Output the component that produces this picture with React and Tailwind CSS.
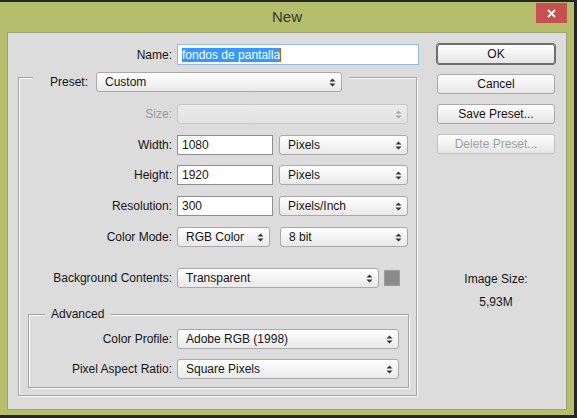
import React from 'react';

function Arrows({ color = '#333' }) {
  return (
    <svg width="7" height="9" viewBox="0 0 7 9" className="shrink-0">
      <path d="M3.5 0.5L6.5 3.5H0.5Z M3.5 8.5L6.5 5.5H0.5Z" fill={color} />
    </svg>
  );
}

function Select({ w, children, disabled }) {
  return (
    <div
      className={`flex h-[20px] ${w} shrink-0 items-center justify-between rounded-[3px] border pl-[8px] pr-[5px] ${
        disabled
          ? 'border-[#c8c8c8] bg-gradient-to-b from-[#ebebeb] to-[#e2e2e2]'
          : 'border-[#a9a9a9] bg-gradient-to-b from-[#ffffff] to-[#e9e9e9]'
      }`}
    >
      <span className="leading-none">{children}</span>
      <Arrows color={disabled ? '#a8a8a8' : '#333'} />
    </div>
  );
}

function Input({ w, children }) {
  return (
    <div className={`flex h-[20px] ${w} shrink-0 items-center border border-[#8e8e8e] bg-white pl-[4px]`}>
      <span className="leading-none">{children}</span>
    </div>
  );
}

function Row({ label, labelW, mt, children, muted }) {
  return (
    <div className={`flex h-[20px] items-center ${mt}`}>
      <span className={`${labelW} shrink-0 pr-[5px] text-right ${muted ? 'text-[#9a9a9a]' : ''}`}>{label}</span>
      {children}
    </div>
  );
}

function Btn({ children, primary, disabled, mt }) {
  return (
    <div
      className={`flex h-[20px] w-[118px] items-center justify-center rounded-[3px] border bg-gradient-to-b from-[#fdfdfd] to-[#e6e6e6] ${mt} ${
        primary ? 'border-[#6e6e6e] shadow-[0_0_0_1px_#6e6e6e]' : disabled ? 'border-[#c2c2c2]' : 'border-[#a9a9a9]'
      } ${disabled ? 'text-[#a0a0a0]' : ''}`}
    >
      {children}
    </div>
  );
}

export default function App() {
  return (
    <div className="h-[418px] w-[577px] bg-[#262626] pt-[2px] pr-[3px] pb-[3px] font-['Liberation_Sans',Arial,sans-serif] text-[12px] text-[#141414]">
      <div className="flex h-full flex-col bg-[#b5bf6b]">
        {/* title bar */}
        <div className="grid h-[30px] shrink-0 grid-cols-[1fr_auto_1fr] items-center">
          <div />
          <span className="text-[15px] text-[#353535]">New</span>
          <div className="flex justify-end self-start">
            <button
              type="button"
              className="mt-[1px] mr-[7px] flex h-[20px] w-[31px] items-center justify-center bg-[#c75050]"
            >
              <svg width="9" height="9" viewBox="0 0 9 9">
                <path d="M1 1L8 8M8 1L1 8" stroke="#fff" strokeWidth="1.8" />
              </svg>
            </button>
          </div>
        </div>

        {/* dialog body */}
        <div className="mx-[7px] mb-[5px] flex flex-1 border border-[#9aa27c] bg-[#dcdcdc]">
          <div className="flex w-[412px] shrink-0 flex-col">
            <div className="mt-[11px] flex h-[21px] items-center">
              <span className="w-[169px] shrink-0 pr-[5px] text-right">Name:</span>
              <div className="flex h-[21px] w-[242px] items-center border border-[#8fbbe6] bg-white pl-[4px]">
                <span className="bg-[#3399ff] leading-[14px] text-white">fondos de pantalla</span>
                <span className="h-[14px] w-[1px] bg-[#c86400]" />
              </div>
            </div>

            {/* preset group */}
            <div className="mt-[12px] ml-[10px] w-[399px] border border-[#a3a3a3] pb-[6px] shadow-[inset_1px_1px_0_#fff,1px_1px_0_#fff]">
              <div className="-mt-[6px] ml-[14px] flex w-fit items-center gap-[8px] bg-[#dcdcdc] pr-[7px] pl-[17px]">
                <span>Preset:</span>
                <Select w="w-[246px]">Custom</Select>
              </div>

              <Row label="Size:" labelW="w-[158px]" mt="mt-[12px]" muted>
                <Select w="w-[231px]" disabled />
              </Row>
              <Row label="Width:" labelW="w-[158px]" mt="mt-[11px]">
                <Input w="w-[96px]">1080</Input>
                <div className="ml-[6px]">
                  <Select w="w-[129px]">Pixels</Select>
                </div>
              </Row>
              <Row label="Height:" labelW="w-[158px]" mt="mt-[10px]">
                <Input w="w-[96px]">1920</Input>
                <div className="ml-[6px]">
                  <Select w="w-[129px]">Pixels</Select>
                </div>
              </Row>
              <Row label="Resolution:" labelW="w-[158px]" mt="mt-[11px]">
                <Input w="w-[96px]">300</Input>
                <div className="ml-[6px]">
                  <Select w="w-[129px]">Pixels/Inch</Select>
                </div>
              </Row>
              <Row label="Color Mode:" labelW="w-[158px]" mt="mt-[11px]">
                <Select w="w-[93px]">RGB Color</Select>
                <div className="ml-[10px]">
                  <Select w="w-[128px]">8 bit</Select>
                </div>
              </Row>
              <Row label="Background Contents:" labelW="w-[158px]" mt="mt-[21px]">
                <Select w="w-[202px]">Transparent</Select>
                <div className="ml-[5px] h-[16px] w-[16px] border border-[#9c9c9c] bg-[#8a8a8a]" />
              </Row>

              {/* advanced group */}
              <div className="mt-[26px] mb-[1px] ml-[9px] w-[381px] border border-[#a3a3a3] pb-[8px] shadow-[inset_1px_1px_0_#fff,1px_1px_0_#fff]">
                <div className="-mt-[8px] ml-[16px] w-fit bg-[#dcdcdc] px-[6px] leading-[14px]">Advanced</div>
                <Row label="Color Profile:" labelW="w-[148px]" mt="mt-[8px]">
                  <Select w="w-[222px]">Adobe RGB (1998)</Select>
                </Row>
                <Row label="Pixel Aspect Ratio:" labelW="w-[148px]" mt="mt-[10px]">
                  <Select w="w-[222px]">Square Pixels</Select>
                </Row>
              </div>
            </div>
          </div>

          {/* buttons */}
          <div className="ml-[17px] flex w-[118px] flex-col items-center">
            <Btn primary mt="mt-[11px]">OK</Btn>
            <Btn mt="mt-[10px]">Cancel</Btn>
            <Btn mt="mt-[10px]">Save Preset...</Btn>
            <Btn disabled mt="mt-[10px]">Delete Preset...</Btn>
            <span className="mt-[118px] leading-[14px]">Image Size:</span>
            <span className="mt-[9px] leading-[14px]">5,93M</span>
          </div>
        </div>
      </div>
    </div>
  );
}
